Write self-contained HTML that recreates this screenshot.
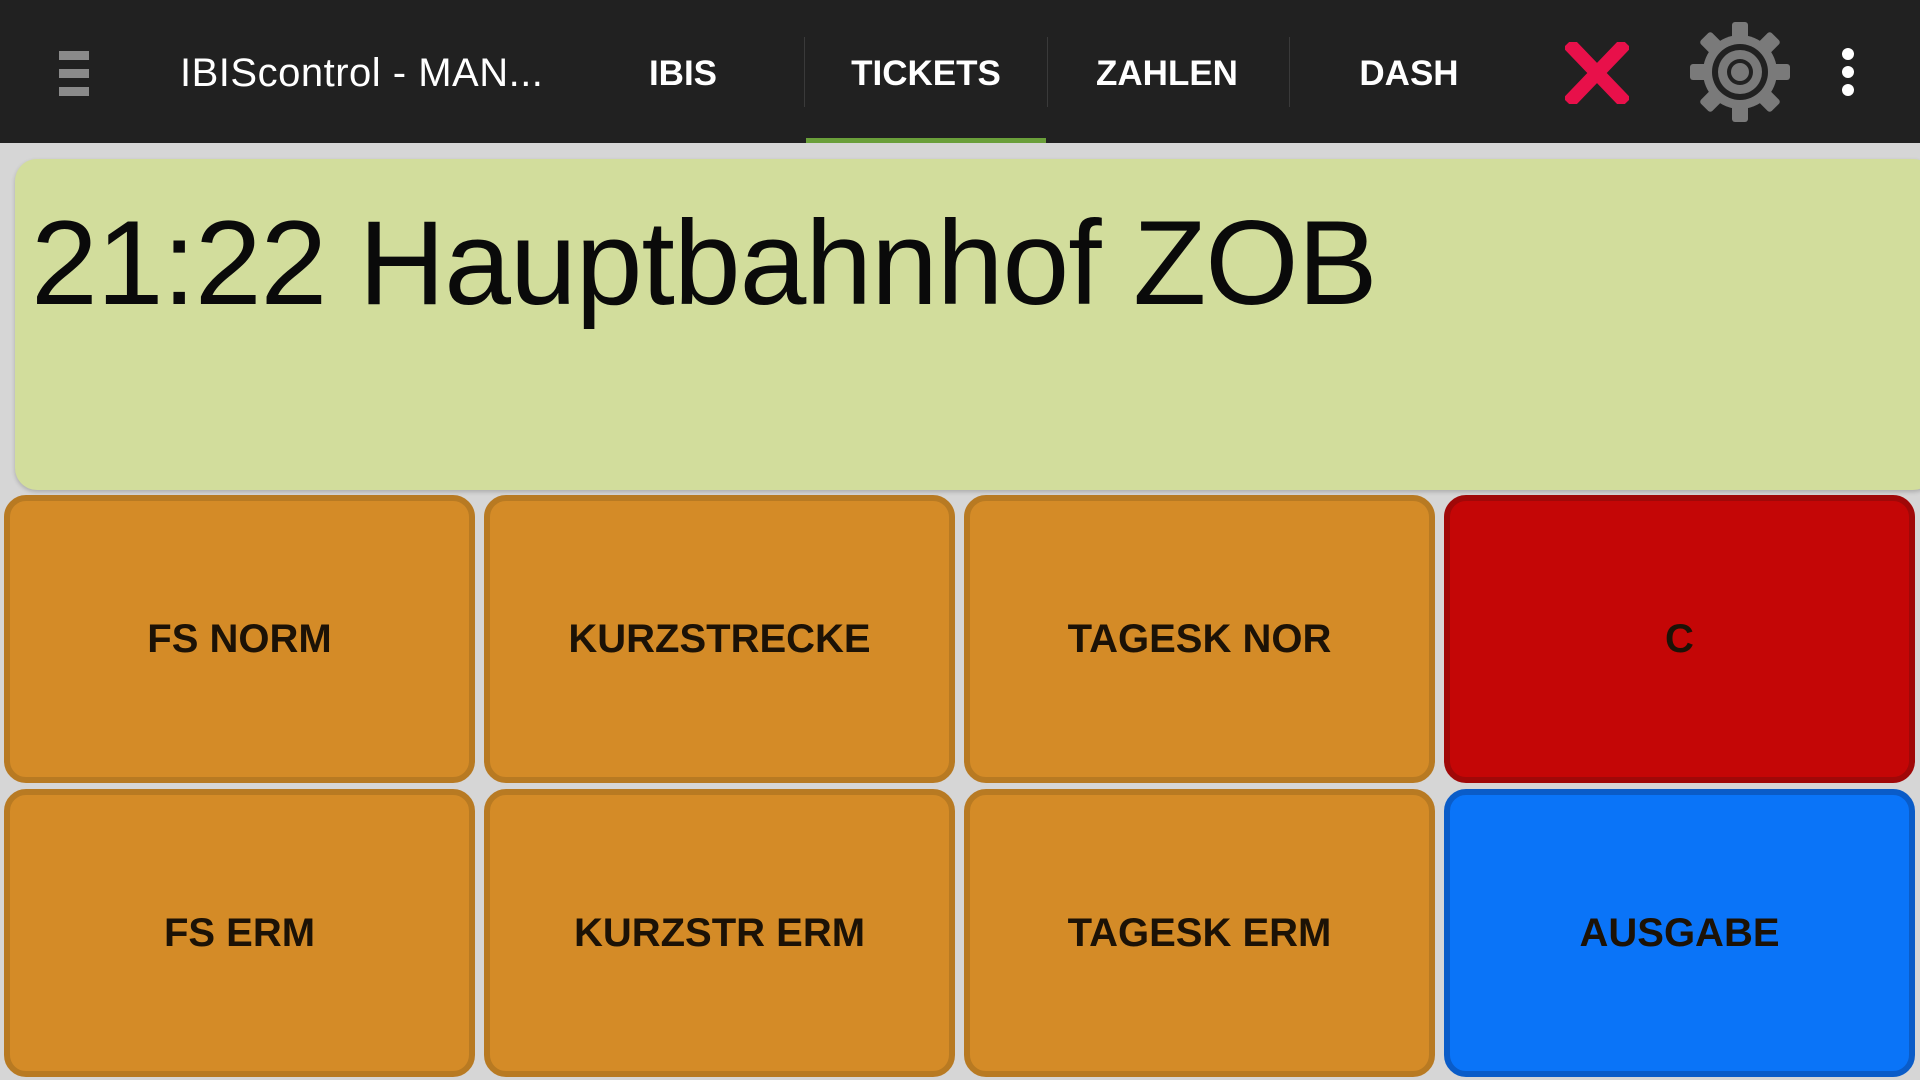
<!DOCTYPE html>
<html><head><meta charset="utf-8"><style>
*{margin:0;padding:0;box-sizing:border-box}
body{width:1920px;height:1080px;background:#d6d6d6;position:relative;overflow:hidden;font-family:"Liberation Sans",sans-serif}
.bar{position:absolute;left:0;top:0;width:1920px;height:143px;background:#212121}
.t{position:absolute;color:#fff;font-size:35px;top:52px;line-height:44px;font-weight:bold;transform:translateX(-50%)}
.sep{position:absolute;top:37px;width:1px;height:70px;background:#3a3a3a}
.panel{position:absolute;left:15px;top:159px;width:1920px;height:331px;background:#d2dd9c;border-radius:22px;box-shadow:0 2px 4px rgba(0,0,0,.2)}
.panel span{position:absolute;left:16px;font-size:120px;line-height:1;color:#0a0a0a;letter-spacing:-1px}
.b{position:absolute;width:471px;height:288px;border:6px solid #b87a22;background:#d48b27;border-radius:22px;display:flex;align-items:center;justify-content:center;font-size:40px;font-weight:bold;color:#1c1206}
</style></head><body>
<div class="bar">
<div style="position:absolute;left:59px;top:51px;width:30px;height:9px;background:#8a8a8a"></div>
<div style="position:absolute;left:59px;top:69px;width:30px;height:9px;background:#8a8a8a"></div>
<div style="position:absolute;left:59px;top:87px;width:30px;height:9px;background:#8a8a8a"></div>
<div style="position:absolute;left:180px;top:50px;color:#fff;font-size:40px;line-height:46px;letter-spacing:0.5px">IBIScontrol - MAN...</div>
<div class="t" style="left:683px">IBIS</div>
<div class="sep" style="left:804px"></div>
<div class="t" style="left:926px">TICKETS</div>
<div class="sep" style="left:1047px"></div>
<div class="t" style="left:1167px">ZAHLEN</div>
<div class="sep" style="left:1289px"></div>
<div class="t" style="left:1409px">DASH</div>
<div style="position:absolute;left:806px;top:138px;width:240px;height:5px;background:#6a9f3a"></div>
<svg style="position:absolute;left:1565px;top:42px" width="64" height="62" viewBox="0 0 64 62"><path d="M8 6 L56 56 M56 6 L8 56" stroke="#e8104a" stroke-width="14" stroke-linecap="square"/></svg>
<svg style="position:absolute;left:1690px;top:22px" width="100" height="100" viewBox="0 0 100 100">
<g fill="#7a7a7a" transform="translate(50,50)">
<rect x="-8" y="-50" width="16" height="20" rx="3"/><rect x="-8" y="-50" width="16" height="20" rx="3" transform="rotate(45)"/><rect x="-8" y="-50" width="16" height="20" rx="3" transform="rotate(90)"/><rect x="-8" y="-50" width="16" height="20" rx="3" transform="rotate(135)"/><rect x="-8" y="-50" width="16" height="20" rx="3" transform="rotate(180)"/><rect x="-8" y="-50" width="16" height="20" rx="3" transform="rotate(225)"/><rect x="-8" y="-50" width="16" height="20" rx="3" transform="rotate(270)"/><rect x="-8" y="-50" width="16" height="20" rx="3" transform="rotate(315)"/>
<circle r="37"/></g>
<circle cx="50" cy="50" r="28" fill="#212121"/><circle cx="50" cy="50" r="22" fill="#7a7a7a"/><circle cx="50" cy="50" r="13" fill="#212121"/><circle cx="50" cy="50" r="9" fill="#7a7a7a"/>
</svg>
<div style="position:absolute;left:1842px;top:48px;width:12px;height:12px;border-radius:50%;background:#fff"></div>
<div style="position:absolute;left:1842px;top:66px;width:12px;height:12px;border-radius:50%;background:#fff"></div>
<div style="position:absolute;left:1842px;top:84px;width:12px;height:12px;border-radius:50%;background:#fff"></div>
</div>
<div class="panel"><span style="top:44px">21:22 Hauptbahnhof ZOB</span></div>
<div class="b" style="left:4px;top:495px">FS NORM</div>
<div class="b" style="left:484px;top:495px">KURZSTRECKE</div>
<div class="b" style="left:964px;top:495px">TAGESK NOR</div>
<div class="b" style="left:1444px;top:495px;background:#c40606;border-color:#a00808">C</div>
<div class="b" style="left:4px;top:789px">FS ERM</div>
<div class="b" style="left:484px;top:789px">KURZSTR ERM</div>
<div class="b" style="left:964px;top:789px">TAGESK ERM</div>
<div class="b" style="left:1444px;top:789px;background:#0a74f8;border-color:#0a5cc8">AUSGABE</div>
</body></html>
